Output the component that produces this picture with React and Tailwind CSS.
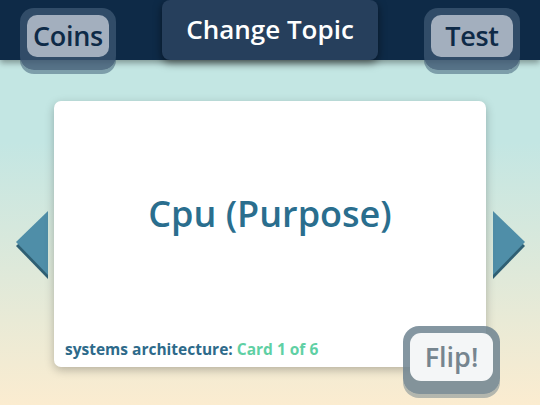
import React from 'react';

const font = { fontFamily: '"Open Sans", "DejaVu Sans", sans-serif' };

const SideButton = ({ label }) => (
  <div className="relative h-[62px] w-[96px] rounded-[14px] bg-[#3b5571]/80 p-[7px] pb-[13px] shadow-[0_4px_0_rgba(40,70,100,0.45)]">
    <div className="flex h-full items-center justify-center rounded-[10px] bg-[#a3afbe] text-[27px] font-semibold tracking-[-0.3px] text-[#0e2a47]">
      {label}
    </div>
  </div>
);

const Arrow = ({ dir }) => (
  <svg width="34" height="70" viewBox="0 0 34 70">
    {dir === 'left' ? (
      <>
        <polygon points="33,4 1,35 33,68" fill="#2f5f73" />
        <polygon points="33,0 1,31 33,64" fill="#4f8ea8" />
      </>
    ) : (
      <>
        <polygon points="1,4 33,35 1,68" fill="#2f5f73" />
        <polygon points="1,0 33,31 1,64" fill="#4f8ea8" />
      </>
    )}
  </svg>
);

export default function App() {
  return (
    <div
      className="flex h-[405px] w-[540px] flex-col overflow-hidden bg-[linear-gradient(180deg,#c3e6e3_0%,#c3e6e3_35%,#fbecd0_100%)]"
      style={font}
    >
      {/* top bar */}
      <div className="relative h-[60px] bg-[#0e2a47] shadow-[0_3px_6px_rgba(0,0,0,0.35)]">
        <div className="flex items-start justify-between px-[20px] pt-[8px]">
          <SideButton label="Coins" />
          <div className="-mt-[8px] flex h-[60px] w-[216px] items-center justify-center rounded-[8px] bg-[#263f5c] pb-[2px] text-[26px] font-semibold text-white shadow-[0_3px_8px_rgba(0,0,0,0.5)]">
            Change Topic
          </div>
          <SideButton label="Test" />
        </div>
      </div>

      {/* card row */}
      <div className="mt-[41px] flex items-start">
        <div className="mt-[110px] ml-[15px] w-[39px]">
          <Arrow dir="left" />
        </div>
        <div className="relative flex h-[266px] w-[432px] flex-col rounded-[7px] bg-white shadow-[0_3px_10px_rgba(0,0,0,0.25)]">
          <div className="flex flex-1 items-center justify-center pb-[10px] text-[36px] font-semibold text-[#2a6e8e]">
            Cpu (Purpose)
          </div>
          <div className="px-[11px] pb-[6px] text-[15.5px] font-bold text-[#2d6a8a]">
            systems architecture: <span className="text-[#5fd0a4]">Card 1 of 6</span>
          </div>
          <div className="absolute top-[225px] left-[349px] h-[68px] w-[97px] rounded-[16px] bg-[#6f8490]/85 p-[7px] pb-[13px] shadow-[0_4px_0_rgba(110,130,140,0.5)]">
            <div className="flex h-full items-center justify-center rounded-[11px] bg-[#f4f6f7] text-[27px] font-semibold text-[#76858f]">
              Flip!
            </div>
          </div>
        </div>
        <div className="mt-[110px] ml-[6px]">
          <Arrow dir="right" />
        </div>
      </div>
    </div>
  );
}
